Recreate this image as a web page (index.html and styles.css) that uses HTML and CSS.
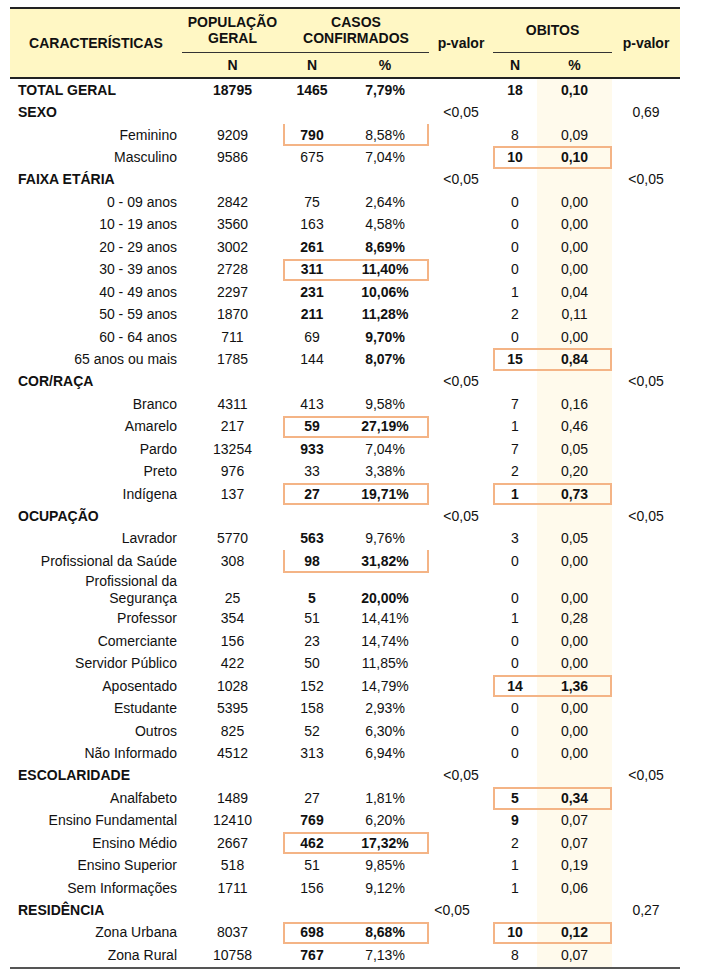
FILE: index.html
```html
<!DOCTYPE html>
<html lang="pt-BR">
<head>
    <meta charset="UTF-8">
    <meta name="viewport" content="width=device-width, initial-scale=1.0">
    <title>Características dos casos</title>
    <link rel="stylesheet" href="styles.css">
</head>
<body>
    <div class="sheet">
        <table class="tab">
            <colgroup>
                <col class="c-lbl">
                <col class="c-pop">
                <col class="c-cn">
                <col class="c-cp">
                <col class="c-pv">
                <col class="c-on">
                <col class="c-op">
                <col class="c-pv2">
            </colgroup>
            <thead>
                <tr class="h1">
                    <th rowspan="2" class="span2">CARACTERÍSTICAS</th>
                    <th class="grp">POPULAÇÃO<br>GERAL</th>
                    <th colspan="2" class="grp">CASOS<br>CONFIRMADOS</th>
                    <th rowspan="2" class="span2">p-valor</th>
                    <th colspan="2" class="grp">OBITOS</th>
                    <th rowspan="2" class="span2">p-valor</th>
                </tr>
                <tr class="h2">
                    <th>N</th>
                    <th>N</th>
                    <th>%</th>
                    <th>N</th>
                    <th>%</th>
                </tr>
            </thead>
            <tbody>
                <tr class="total">
                    <td class="cat">TOTAL GERAL</td><td>18795</td><td>1465</td><td>7,79%</td><td></td><td>18</td><td class="cream">0,10</td><td></td>
                </tr>
                <tr>
                    <td class="cat">SEXO</td><td></td><td></td><td></td><td class="pv">&lt;0,05</td><td></td><td class="cream"></td><td class="pv">0,69</td>
                </tr>
                <tr>
                    <td class="lbl">Feminino</td><td>9209</td><td class="b bl nt">790</td><td class="br nt">8,58%</td><td></td><td>8</td><td class="cream">0,09</td><td></td>
                </tr>
                <tr>
                    <td class="lbl">Masculino</td><td>9586</td><td>675</td><td>7,04%</td><td></td><td class="b bl">10</td><td class="cream b br">0,10</td><td></td>
                </tr>
                <tr>
                    <td class="cat">FAIXA ETÁRIA</td><td></td><td></td><td></td><td class="pv">&lt;0,05</td><td></td><td class="cream"></td><td class="pv">&lt;0,05</td>
                </tr>
                <tr>
                    <td class="lbl">0 - 09 anos</td><td>2842</td><td>75</td><td>2,64%</td><td></td><td>0</td><td class="cream">0,00</td><td></td>
                </tr>
                <tr>
                    <td class="lbl">10 - 19 anos</td><td>3560</td><td>163</td><td>4,58%</td><td></td><td>0</td><td class="cream">0,00</td><td></td>
                </tr>
                <tr>
                    <td class="lbl">20 - 29 anos</td><td>3002</td><td class="b">261</td><td class="b">8,69%</td><td></td><td>0</td><td class="cream">0,00</td><td></td>
                </tr>
                <tr>
                    <td class="lbl">30 - 39 anos</td><td>2728</td><td class="b bl">311</td><td class="b br">11,40%</td><td></td><td>0</td><td class="cream">0,00</td><td></td>
                </tr>
                <tr>
                    <td class="lbl">40 - 49 anos</td><td>2297</td><td class="b">231</td><td class="b">10,06%</td><td></td><td>1</td><td class="cream">0,04</td><td></td>
                </tr>
                <tr>
                    <td class="lbl">50 - 59 anos</td><td>1870</td><td class="b">211</td><td class="b">11,28%</td><td></td><td>2</td><td class="cream">0,11</td><td></td>
                </tr>
                <tr>
                    <td class="lbl">60 - 64 anos</td><td>711</td><td>69</td><td class="b">9,70%</td><td></td><td>0</td><td class="cream">0,00</td><td></td>
                </tr>
                <tr>
                    <td class="lbl">65 anos ou mais</td><td>1785</td><td>144</td><td class="b">8,07%</td><td></td><td class="b bl">15</td><td class="cream b br">0,84</td><td></td>
                </tr>
                <tr>
                    <td class="cat">COR/RAÇA</td><td></td><td></td><td></td><td class="pv">&lt;0,05</td><td></td><td class="cream"></td><td class="pv">&lt;0,05</td>
                </tr>
                <tr>
                    <td class="lbl">Branco</td><td>4311</td><td>413</td><td>9,58%</td><td></td><td>7</td><td class="cream">0,16</td><td></td>
                </tr>
                <tr>
                    <td class="lbl">Amarelo</td><td>217</td><td class="b bl">59</td><td class="b br">27,19%</td><td></td><td>1</td><td class="cream">0,46</td><td></td>
                </tr>
                <tr>
                    <td class="lbl">Pardo</td><td>13254</td><td class="b">933</td><td>7,04%</td><td></td><td>7</td><td class="cream">0,05</td><td></td>
                </tr>
                <tr>
                    <td class="lbl">Preto</td><td>976</td><td>33</td><td>3,38%</td><td></td><td>2</td><td class="cream">0,20</td><td></td>
                </tr>
                <tr>
                    <td class="lbl">Indígena</td><td>137</td><td class="b bl">27</td><td class="b br">19,71%</td><td></td><td class="b bl">1</td><td class="cream b br">0,73</td><td></td>
                </tr>
                <tr>
                    <td class="cat">OCUPAÇÃO</td><td></td><td></td><td></td><td class="pv">&lt;0,05</td><td></td><td class="cream"></td><td class="pv">&lt;0,05</td>
                </tr>
                <tr>
                    <td class="lbl">Lavrador</td><td>5770</td><td class="b">563</td><td>9,76%</td><td></td><td>3</td><td class="cream">0,05</td><td></td>
                </tr>
                <tr>
                    <td class="lbl">Profissional da Saúde</td><td>308</td><td class="b bl nt">98</td><td class="b br nt">31,82%</td><td></td><td>0</td><td class="cream">0,00</td><td></td>
                </tr>
                <tr class="tall">
                    <td class="lbl">Profissional da<br>Segurança</td><td>25</td><td class="b">5</td><td class="b">20,00%</td><td></td><td>0</td><td class="cream">0,00</td><td></td>
                </tr>
                <tr>
                    <td class="lbl">Professor</td><td>354</td><td>51</td><td>14,41%</td><td></td><td>1</td><td class="cream">0,28</td><td></td>
                </tr>
                <tr>
                    <td class="lbl">Comerciante</td><td>156</td><td>23</td><td>14,74%</td><td></td><td>0</td><td class="cream">0,00</td><td></td>
                </tr>
                <tr>
                    <td class="lbl">Servidor Público</td><td>422</td><td>50</td><td>11,85%</td><td></td><td>0</td><td class="cream">0,00</td><td></td>
                </tr>
                <tr>
                    <td class="lbl">Aposentado</td><td>1028</td><td>152</td><td>14,79%</td><td></td><td class="b bl">14</td><td class="cream b br">1,36</td><td></td>
                </tr>
                <tr>
                    <td class="lbl">Estudante</td><td>5395</td><td>158</td><td>2,93%</td><td></td><td>0</td><td class="cream">0,00</td><td></td>
                </tr>
                <tr>
                    <td class="lbl">Outros</td><td>825</td><td>52</td><td>6,30%</td><td></td><td>0</td><td class="cream">0,00</td><td></td>
                </tr>
                <tr>
                    <td class="lbl">Não Informado</td><td>4512</td><td>313</td><td>6,94%</td><td></td><td>0</td><td class="cream">0,00</td><td></td>
                </tr>
                <tr>
                    <td class="cat">ESCOLARIDADE</td><td></td><td></td><td></td><td class="pv">&lt;0,05</td><td></td><td class="cream"></td><td class="pv">&lt;0,05</td>
                </tr>
                <tr>
                    <td class="lbl">Analfabeto</td><td>1489</td><td>27</td><td>1,81%</td><td></td><td class="b bl">5</td><td class="cream b br">0,34</td><td></td>
                </tr>
                <tr>
                    <td class="lbl">Ensino Fundamental</td><td>12410</td><td class="b">769</td><td>6,20%</td><td></td><td class="b">9</td><td class="cream">0,07</td><td></td>
                </tr>
                <tr>
                    <td class="lbl">Ensino Médio</td><td>2667</td><td class="b bl">462</td><td class="b br">17,32%</td><td></td><td>2</td><td class="cream">0,07</td><td></td>
                </tr>
                <tr>
                    <td class="lbl">Ensino Superior</td><td>518</td><td>51</td><td>9,85%</td><td></td><td>1</td><td class="cream">0,19</td><td></td>
                </tr>
                <tr>
                    <td class="lbl">Sem Informações</td><td>1711</td><td>156</td><td>9,12%</td><td></td><td>1</td><td class="cream">0,06</td><td></td>
                </tr>
                <tr>
                    <td class="cat">RESIDÊNCIA</td><td></td><td></td><td></td><td class="pv shift">&lt;0,05</td><td></td><td class="cream"></td><td class="pv">0,27</td>
                </tr>
                <tr>
                    <td class="lbl">Zona Urbana</td><td>8037</td><td class="b bl">698</td><td class="b br">8,68%</td><td></td><td class="b bl">10</td><td class="cream b br">0,12</td><td></td>
                </tr>
                <tr class="last">
                    <td class="lbl">Zona Rural</td><td>10758</td><td class="b">767</td><td>7,13%</td><td></td><td>8</td><td class="cream">0,07</td><td></td>
                </tr>
            </tbody>
        </table>
    </div>
</body>
</html>
```

FILE: styles.css
```css
body {
    margin: 0;
    background: #fff;
    font-family: "Liberation Sans", Arial, sans-serif;
    color: #111;
}
.sheet {
    padding: 7px 0 0 10px;
}
.tab {
    width: 670px;
    table-layout: fixed;
    border-collapse: separate;
    border-spacing: 0;
    font-size: 14px;
}
.c-lbl { width: 172px; }
.c-pop { width: 101px; }
.c-cn { width: 58px; }
.c-cp { width: 88px; }
.c-pv { width: 64px; }
.c-on { width: 44px; }
.c-op { width: 75px; }
.c-pv2 { width: 68px; }

/* cabeçalho */
.tab th {
    background: #fff7c4;
    font-weight: bold;
    text-align: center;
    padding: 0;
    line-height: 16px;
}
.h1 th {
    border-top: 2px solid #222;
    height: 43px;
    vertical-align: middle;
}
.h1 th.grp {
    border-bottom: 1px solid #333;
    padding-bottom: 2px;
    height: 41px;
}
.h1 th.span2 {
    border-bottom: 2px solid #222;
}
.h2 th {
    border-bottom: 2px solid #222;
    height: 24px;
}

/* corpo */
.tab td {
    padding: 0;
    height: 22.45px;
    line-height: 17px;
    text-align: center;
    vertical-align: middle;
    white-space: nowrap;
}
.tab td.lbl {
    text-align: right;
    padding-right: 5px;
}
.tab td.cat {
    text-align: left;
    padding-left: 8px;
    font-weight: bold;
}
.total td {
    font-weight: bold;
}
.b {
    font-weight: bold;
}
.pv {
    font-weight: normal;
}
.pv.shift {
    padding-right: 18px;
}
.cream {
    background: #fffaec;
}
.tall td {
    height: 33px;
    vertical-align: bottom;
    padding-bottom: 1px;
}
.last td {
    border-bottom: 2px solid #555;
}

/* destaques em laranja */
.bl {
    box-shadow: inset 2px 0 0 #f4b486, inset 0 2px 0 #f4b486, inset 0 -2px 0 #f4b486;
}
.br {
    box-shadow: inset -2px 0 0 #f4b486, inset 0 2px 0 #f4b486, inset 0 -2px 0 #f4b486;
}
.bl.nt {
    box-shadow: inset 2px 0 0 #f4b486, inset 0 -2px 0 #f4b486;
}
.br.nt {
    box-shadow: inset -2px 0 0 #f4b486, inset 0 -2px 0 #f4b486;
}
```
